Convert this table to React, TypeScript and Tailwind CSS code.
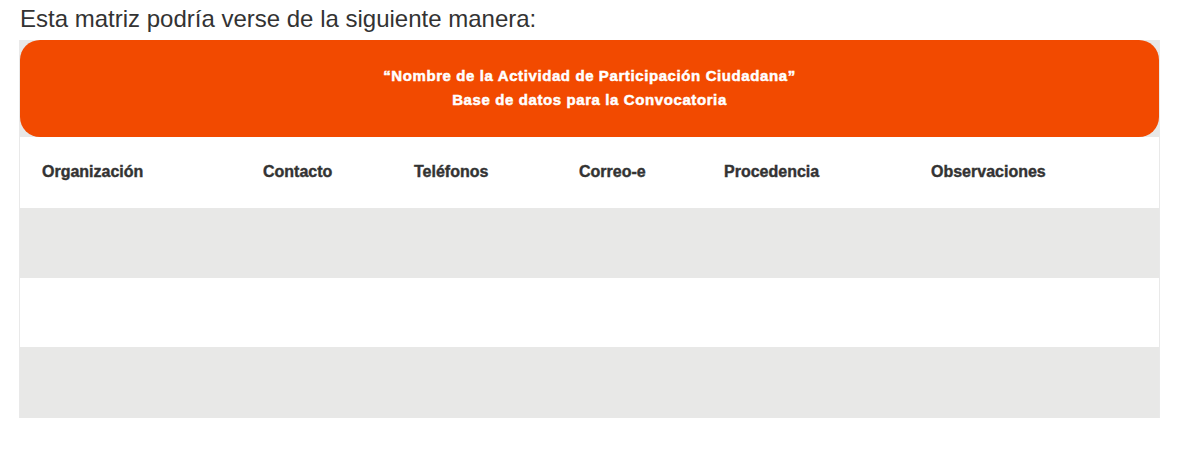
const columns = [
  { label: "Organización", width: "w-[221px]" },
  { label: "Contacto", width: "w-[151px]" },
  { label: "Teléfonos", width: "w-[165px]" },
  { label: "Correo-e", width: "w-[145px]" },
  { label: "Procedencia", width: "w-[207px]" },
  { label: "Observaciones", width: "flex-1" },
];

export default function App() {
  return (
    <div className="bg-white w-[1181px] h-[450px] font-['Liberation_Sans',Arial,sans-serif] text-[#333]">
      <p className="pl-5 pt-[5px] text-[24px] leading-[28px]">
        Esta matriz podría verse de la siguiente manera:
      </p>

      <div className="ml-[19px] mt-[7px] w-[1141px] border-x border-[#e9e9e9]">
        <div className="bg-[#e8e8e7]">
          <div className="h-[97px] rounded-[20px] bg-[#f24a00] flex flex-col items-center justify-center text-white font-bold text-[15px] leading-[24px] tracking-[0.6px] [-webkit-text-stroke:0.5px_white]">
            <span className="-mt-[2px]">“Nombre de la Actividad de Participación Ciudadana”</span>
            <span>Base de datos para la Convocatoria</span>
          </div>
        </div>

        <div className="flex h-[71px] items-center pb-[1px] bg-white">
          {columns.map((c) => (
            <div
              key={c.label}
              className={`${c.width} pl-[22px] text-[16px] font-bold text-[#333] [-webkit-text-stroke:0.4px_#333]`}
            >
              {c.label}
            </div>
          ))}
        </div>
        <div className="h-[70px] bg-[#e8e8e7]" />
        <div className="h-[69px] bg-white" />
        <div className="h-[71px] bg-[#e8e8e7]" />
      </div>
    </div>
  );
}
